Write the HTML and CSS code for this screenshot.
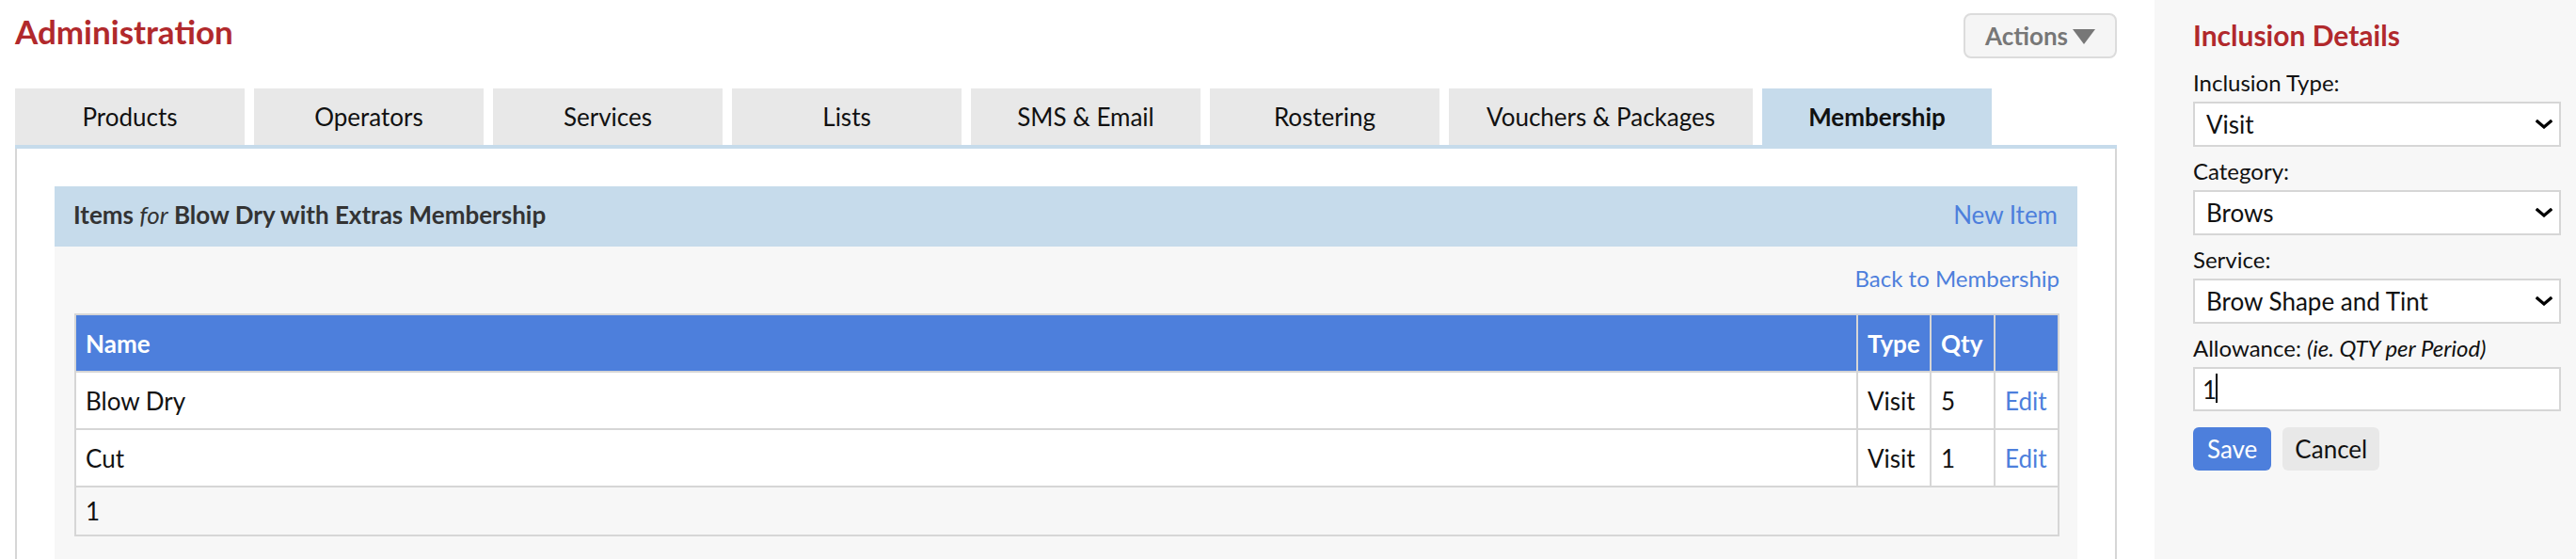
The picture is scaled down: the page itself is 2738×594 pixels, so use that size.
FILE: index.html
```html
<!DOCTYPE html>
<html lang="en">
<head>
<meta charset="utf-8">
<title>Administration</title>
<link rel="stylesheet" href="styles.css">
</head>
<body>
<div class="page">
  <main class="main">
    <div class="topbar">
      <h1 class="title">Administration</h1>
      <button class="actions" type="button">Actions<svg class="tri" viewBox="0 0 24 16" width="24" height="16"><path d="M0 0 H24 L12 16 Z" fill="#777"/></svg></button>
    </div>
    <nav class="tabs">
      <a class="tab">Products</a>
      <a class="tab">Operators</a>
      <a class="tab">Services</a>
      <a class="tab">Lists</a>
      <a class="tab">SMS &amp; Email</a>
      <a class="tab">Rostering</a>
      <a class="tab">Vouchers &amp; Packages</a>
      <a class="tab tab-active">Membership</a>
    </nav>
    <div class="panel">
      <section class="items">
        <div class="items-head">
          <span class="items-title">Items <em>for</em> Blow Dry with Extras Membership</span>
          <a class="link">New Item</a>
        </div>
        <div class="items-body">
          <div class="back-row"><a class="link">Back to Membership</a></div>
          <table class="grid">
            <thead>
              <tr>
                <th class="col-name">Name</th>
                <th class="col-type">Type</th>
                <th class="col-qty">Qty</th>
                <th class="col-edit"></th>
              </tr>
            </thead>
            <tbody>
              <tr>
                <td>Blow Dry</td>
                <td>Visit</td>
                <td>5</td>
                <td><a class="link">Edit</a></td>
              </tr>
              <tr>
                <td>Cut</td>
                <td>Visit</td>
                <td>1</td>
                <td><a class="link">Edit</a></td>
              </tr>
            </tbody>
            <tfoot>
              <tr>
                <td colspan="4">1</td>
              </tr>
            </tfoot>
          </table>
        </div>
      </section>
    </div>
  </main>
  <aside class="sidebar">
    <h2 class="side-title">Inclusion Details</h2>
    <div class="field">
      <label class="label">Inclusion Type:</label>
      <div class="select-wrap">
        <select class="select"><option>Visit</option></select>
        <svg class="chev" viewBox="0 0 18 10" width="18" height="10"><path d="M2 2 L9 8 L16 2" fill="none" stroke="#000" stroke-width="3.2" stroke-linecap="square"/></svg>
      </div>
    </div>
    <div class="field">
      <label class="label">Category:</label>
      <div class="select-wrap">
        <select class="select"><option>Brows</option></select>
        <svg class="chev" viewBox="0 0 18 10" width="18" height="10"><path d="M2 2 L9 8 L16 2" fill="none" stroke="#000" stroke-width="3.2" stroke-linecap="square"/></svg>
      </div>
    </div>
    <div class="field">
      <label class="label">Service:</label>
      <div class="select-wrap">
        <select class="select"><option>Brow Shape and Tint</option></select>
        <svg class="chev" viewBox="0 0 18 10" width="18" height="10"><path d="M2 2 L9 8 L16 2" fill="none" stroke="#000" stroke-width="3.2" stroke-linecap="square"/></svg>
      </div>
    </div>
    <div class="field">
      <label class="label">Allowance: <em class="hint">(ie. QTY per Period)</em></label>
      <div class="input-wrap">
        <input class="input" type="text" value="1">
        <span class="caret"></span>
      </div>
    </div>
    <div class="buttons">
      <button class="btn btn-save" type="button">Save</button>
      <button class="btn btn-cancel" type="button">Cancel</button>
    </div>
  </aside>
</div>
</body>
</html>
```

FILE: styles.css
```css
* { box-sizing: border-box; }

html, body {
  margin: 0;
  padding: 0;
  background: #fff;
}

body {
  font-family: Lato, "Open Sans", Arial, sans-serif;
  font-size: 26px;
  color: #111;
}

.page {
  display: flex;
  min-height: 100vh;
}

.main {
  flex: 1;
  display: flex;
  flex-direction: column;
  padding: 0 40px 0 16px;
}

.topbar {
  display: flex;
  justify-content: space-between;
  align-items: flex-start;
  padding-top: 13px;
  margin-bottom: 32px;
}

.title {
  margin: 0;
  font-size: 35px;
  line-height: 40px;
  font-weight: 700;
  color: #b1292c;
}

.actions {
  display: flex;
  align-items: center;
  margin-top: 1px;
  height: 48px;
  padding: 0 21px 0 21px;
  border: 2px solid #dcdcdc;
  border-radius: 8px;
  background: #f5f5f5;
  font-family: Lato, Arial, sans-serif;
  font-size: 26px;
  font-weight: 700;
  color: #777;
}

.tri {
  margin-left: 5px;
  margin-top: 1px;
}

.tabs {
  display: flex;
  gap: 10px;
  border-bottom: 4px solid #c6dbeb;
}

.tab {
  min-width: 244px;
  height: 60px;
  padding: 0 40px;
  line-height: 60px;
  text-align: center;
  background: #e8e8e8;
  color: #111;
}

.tab-active {
  background: #c6dbeb;
  font-weight: 700;
}

.panel {
  flex: 1;
  border-left: 2px solid #d6d6d6;
  border-right: 2px solid #d6d6d6;
  padding: 40px 40px 0 40px;
}

.items-head {
  display: flex;
  justify-content: space-between;
  height: 64px;
  line-height: 60px;
  padding: 0 21px 4px 20px;
  background: #c6dbeb;
}

.items-title {
  font-weight: 700;
  color: #333;
}

.items-title em {
  font-weight: 400;
}

.link {
  color: #4d7fdc;
  cursor: pointer;
}

.items-body {
  background: #f7f7f7;
  padding: 16px 19px 40px 21px;
}

.back-row {
  text-align: right;
  font-size: 24px;
  line-height: 36px;
  margin-bottom: 19px;
}

.grid {
  width: 100%;
  border-collapse: collapse;
  border: 2px solid #d6d6d6;
  background: #fff;
}

.grid th,
.grid td {
  border: 2px solid #d6d6d6;
  padding: 0 10px;
  height: 61px;
  text-align: left;
  vertical-align: middle;
}

.grid th {
  background: #4d7fdc;
  color: #fff;
  font-weight: 700;
}

.col-type { width: 78px; }
.col-qty { width: 68px; }
.col-edit { width: 68px; }

.grid tfoot td {
  background: #f7f7f7;
  height: 52px;
}

.sidebar {
  width: 448px;
  flex: none;
  background: #f7f7f7;
  padding: 18px 16px 0 41px;
}

.side-title {
  margin: 0 0 14px;
  font-size: 30px;
  line-height: 38px;
  font-weight: 700;
  color: #b1292c;
}

.field {
  margin-bottom: 8px;
}

.label {
  display: block;
  font-size: 24px;
  line-height: 36px;
  margin-bottom: 2px;
}

.hint {
  font-weight: 400;
}

.select-wrap,
.input-wrap {
  position: relative;
}

.select {
  display: block;
  width: 100%;
  height: 48px;
  padding: 0 40px 0 12px;
  border: 2px solid #d6d6d6;
  border-radius: 0;
  background: #fff;
  font-family: Lato, Arial, sans-serif;
  font-size: 26px;
  color: #111;
  -webkit-appearance: none;
  appearance: none;
}

.chev {
  position: absolute;
  right: 9px;
  top: 19px;
  pointer-events: none;
}

.input {
  display: block;
  width: 100%;
  height: 47px;
  padding: 0 8px;
  border: 2px solid #d6d6d6;
  background: #fff;
  font-family: Lato, Arial, sans-serif;
  font-size: 26px;
  color: #111;
  outline: none;
}

.caret {
  position: absolute;
  left: 24px;
  top: 7px;
  width: 2px;
  height: 31px;
  background: #000;
}

.buttons {
  display: flex;
  gap: 12px;
  margin-top: 17px;
}

.btn {
  height: 46px;
  padding: 0 15px;
  border: none;
  border-radius: 6px;
  font-family: Lato, Arial, sans-serif;
  font-size: 26px;
}

.btn-save {
  background: #4d7fdc;
  color: #fff;
}

.btn-cancel {
  padding: 0 13px;
  background: #e8e8e8;
  color: #111;
}
```
